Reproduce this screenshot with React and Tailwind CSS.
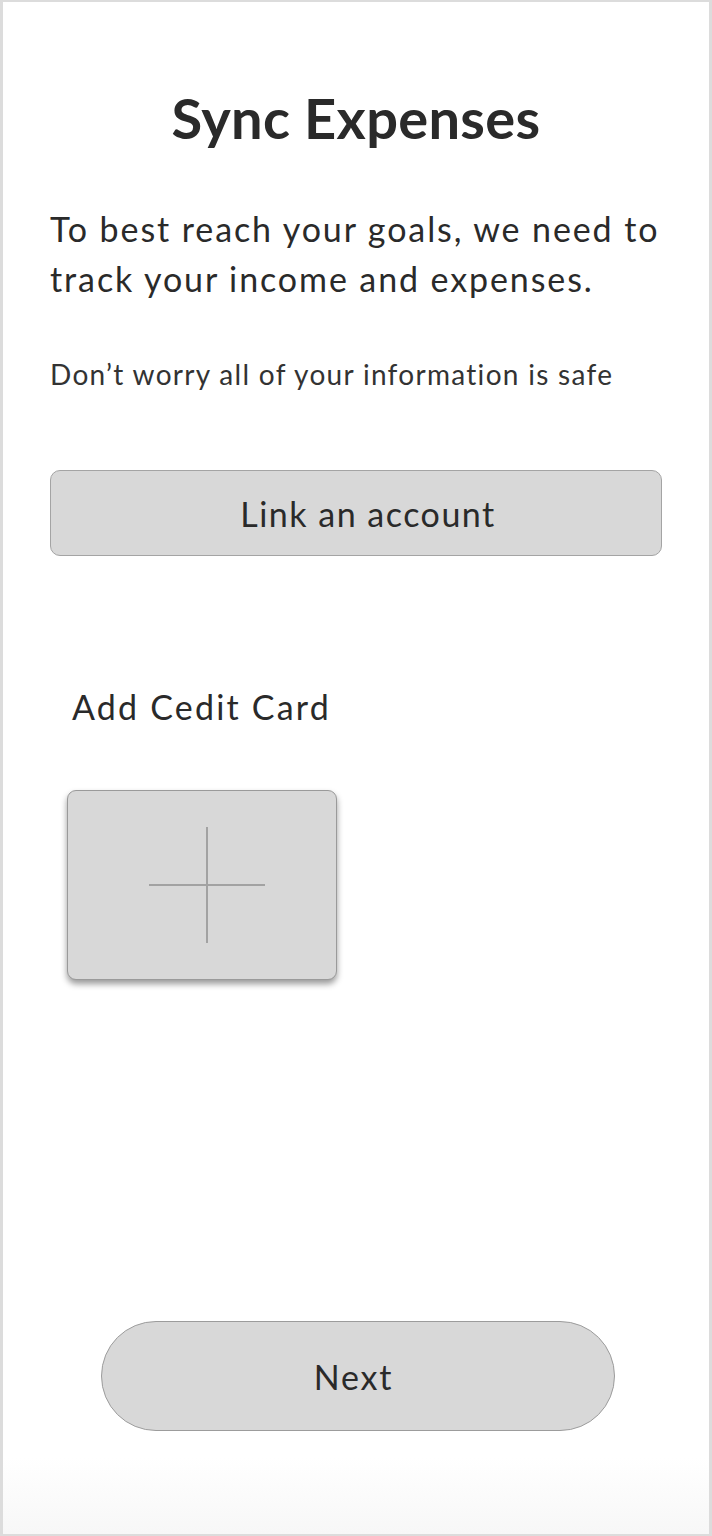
export default function App() {
    return (
        <div className="h-[1536px] w-[712px] border-x-[3px] border-t-2 border-b-2 border-[#dcdcdc] bg-linear-to-b from-white from-95% to-[#f7f7f7] text-[#2a2a2a]"
            style={{ fontFamily: 'Lato, "Open Sans", sans-serif' }}>
            <div className="flex flex-col px-[47px]">

                {/* Title */}
                <h1 className="mt-[88px] text-center text-[56px] font-bold leading-[56px] tracking-[0.3px]">
                    Sync Expenses
                </h1>

                {/* Intro */}
                <p className="mt-[58px] text-[34px] leading-[50px] tracking-[1.9px]">
                    To best reach your goals, we need to track your income and expenses.
                </p>
                <p className="mt-[50px] text-[28px] leading-[40px] tracking-[1.3px] text-[#333]">
                    Don’t worry all of your information is safe
                </p>

                {/* Link account */}
                <button className="mt-[76px] h-[86px] w-[612px] rounded-[10px] border border-[#a4a4a4] bg-[#d8d8d8] pl-6 text-[34px] tracking-[1.5px]">
                    Link an account
                </button>

                {/* Credit card */}
                <p className="mt-[126px] pl-[22px] text-[34px] leading-[50px] tracking-[2.2px]">Add Cedit Card</p>

                <button className="mt-[58px] ml-[17px] flex h-[190px] w-[270px] items-center justify-center rounded-[9px] border border-[#9a9a9a] bg-[#d8d8d8] shadow-[0_4px_6px_rgba(0,0,0,0.4)]">
                    <svg width="116" height="116" viewBox="0 0 116 116" className="ml-[10px]">
                        <line x1="58" y1="0" x2="58" y2="116" stroke="#a2a2a2" strokeWidth="2" />
                        <line x1="0" y1="58" x2="116" y2="58" stroke="#a2a2a2" strokeWidth="2" />
                    </svg>
                </button>

                {/* Next */}
                <div className="mt-[341px] flex justify-center">
                    <button className="ml-[3px] h-[110px] w-[514px] rounded-full border border-[#9c9c9c] bg-[#d8d8d8] pr-2 text-[34px] tracking-[1.8px]">
                        Next
                    </button>
                </div>
            </div>
        </div>
    )
}
